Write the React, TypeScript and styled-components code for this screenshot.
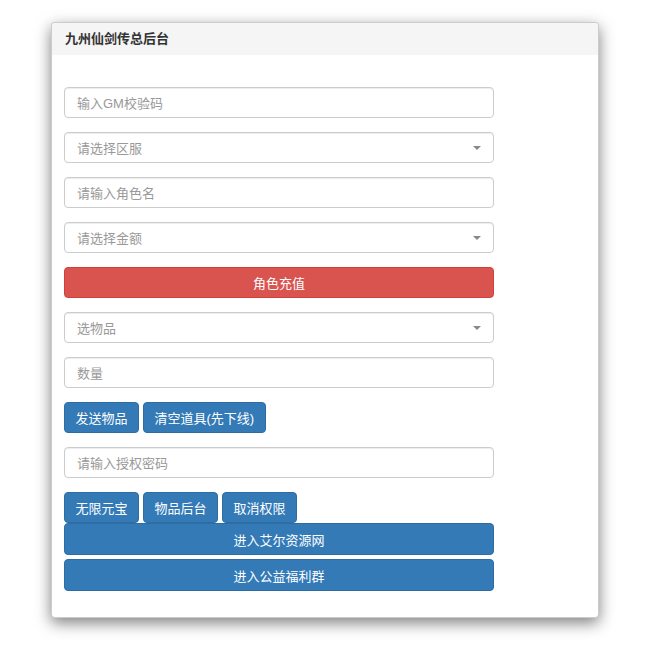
import styled, { createGlobalStyle } from "styled-components";

const GlobalStyle = createGlobalStyle`
  html, body {
    margin: 0;
    padding: 0;
    background: #ffffff;
  }
  body {
    font-family: "Liberation Sans", "Noto Sans CJK SC", sans-serif;
    color: #333;
  }
`;

interface FieldProps {
  placeholder: string;
  select?: boolean;
}

function Field({ placeholder, select }: FieldProps) {
  return (
    <FieldBox>
      <Placeholder>{placeholder}</Placeholder>
      {select && <Caret />}
    </FieldBox>
  );
}

export default function App() {
  return (
    <>
      <GlobalStyle />
      <Page>
        <Card>
          <Header>九州仙剑传总后台</Header>
          <Body>
            <Form>
              <Field placeholder="输入GM校验码" />
              <Field placeholder="请选择区服" select />
              <Field placeholder="请输入角色名" />
              <Field placeholder="请选择金额" select />
              <BlockButton variant="danger">角色充值</BlockButton>
              <Field placeholder="选物品" select />
              <Field placeholder="数量" />
              <ButtonRow>
                <Button>发送物品</Button>
                <Button>清空道具(先下线)</Button>
              </ButtonRow>
              <Field placeholder="请输入授权密码" />
              <ButtonRow tight>
                <Button>无限元宝</Button>
                <Button>物品后台</Button>
                <Button>取消权限</Button>
              </ButtonRow>
              <BlockButton tight>进入艾尔资源网</BlockButton>
              <BlockButton>进入公益福利群</BlockButton>
            </Form>
          </Body>
        </Card>
      </Page>
    </>
  );
}

const Page = styled.div`
  padding: 22px 0 40px 51px;
`;

const Card = styled.div`
  width: 546px;
  border: 1px solid rgba(0, 0, 0, 0.2);
  border-radius: 4px;
  background: #fff;
  box-shadow: 0 5px 15px rgba(0, 0, 0, 0.5);
  overflow: hidden;
`;

const Header = styled.div`
  height: 32px;
  line-height: 32px;
  padding: 0 13px;
  background: #f5f5f5;
  font-family: "Liberation Sans", "Noto Sans CJK SC", sans-serif;
  font-size: 13px;
  font-weight: bold;
  color: #333;
`;

const Body = styled.div`
  padding: 32px 12px 26px;
`;

const Form = styled.div`
  width: 430px;
  display: flex;
  flex-direction: column;
`;

const FieldBox = styled.div`
  position: relative;
  box-sizing: border-box;
  height: 31px;
  margin-bottom: 14px;
  padding: 0 12px;
  display: flex;
  align-items: center;
  border: 1px solid #ccc;
  border-radius: 4px;
  background: #fff;
  box-shadow: inset 0 1px 1px rgba(0, 0, 0, 0.075);
`;

const Placeholder = styled.span`
  flex: 1;
  font-size: 13px;
  color: #999;
`;

const Caret = styled.span`
  width: 0;
  height: 0;
  border-left: 4px solid transparent;
  border-right: 4px solid transparent;
  border-top: 4px solid #888;
`;

const ButtonRow = styled.div<{ tight?: boolean }>`
  display: flex;
  gap: 4px;
  margin-bottom: ${(p) => (p.tight ? "0" : "14px")};
`;

const Button = styled.button`
  box-sizing: border-box;
  height: 31px;
  padding: 0 10.5px;
  border: 1px solid #2e6da4;
  border-radius: 4px;
  background: #337ab7;
  color: #fff;
  font-family: "Liberation Sans", "Noto Sans CJK SC", sans-serif;
  font-size: 13px;
  cursor: pointer;
`;

const BlockButton = styled(Button)<{ variant?: "danger"; tight?: boolean }>`
  width: 100%;
  height: 32px;
  margin-bottom: ${(p) => (p.tight ? "4px" : p.variant ? "14px" : "0")};
  ${(p) =>
    p.variant === "danger" &&
    `
    height: 31px;
    background: #d9534f;
    border-color: #d43f3a;
  `}
`;
